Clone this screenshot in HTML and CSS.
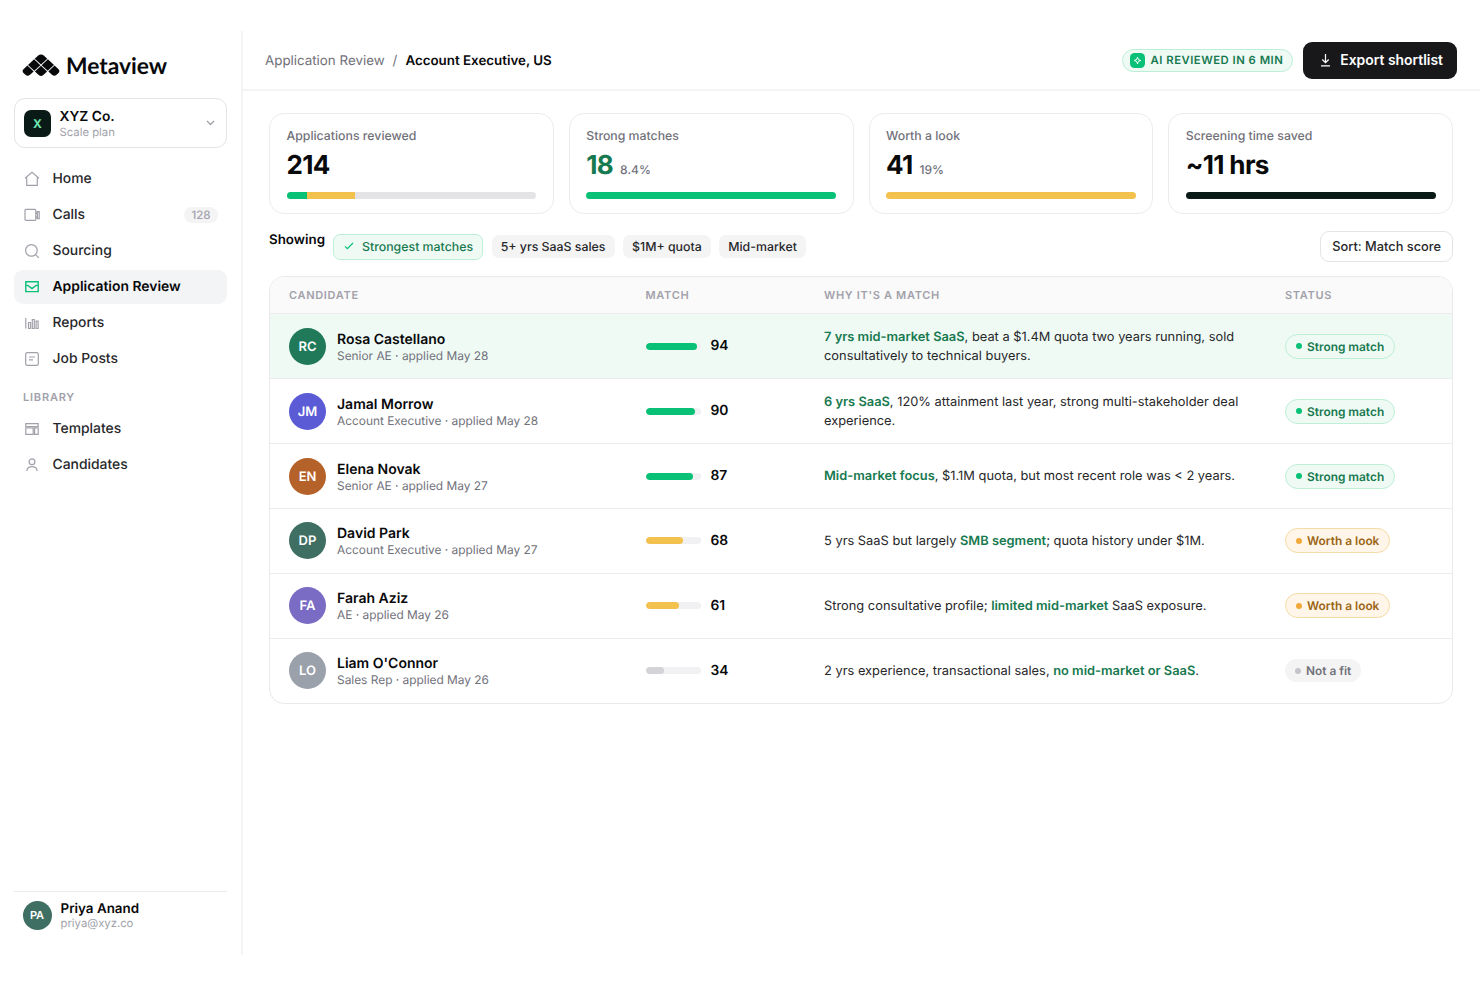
FILE: index.html
```html
<!DOCTYPE html>
<html lang="en">
<head>
    <meta charset="UTF-8">
    <meta name="viewport" content="width=device-width, initial-scale=1.0">
    <title>Metaview - Application Review</title>
    <link rel="stylesheet" href="styles.css">
</head>
<body>
    <div class="app">
        <aside class="sidebar">
            <div class="logo">
                <svg width="38" height="22" viewBox="0 0 38 22">
                    <g transform="translate(19 -1) scale(1.08 1) rotate(45)" fill="#08090a">
                        <path d="M0 4Q0 0 4 0H8.2V8.2H0Z"/>
                        <rect x="9" y="0" width="8" height="8.2"/>
                        <path d="M17.8 0H22.6Q25.6 0 25.6 3V5.2Q25.6 8.2 22.6 8.2H17.8Z"/>
                        <rect x="0" y="9" width="8.2" height="8"/>
                        <path d="M9 9H17V14Q17 17 14 17H9Z"/>
                        <path d="M0 17.8H8.2V22.6Q8.2 25.6 5.2 25.6H3Q0 25.6 0 22.6Z"/>
                    </g>
                </svg>
                <span>Metaview</span>
            </div>

            <div class="workspace">
                <div class="workspace-icon">X</div>
                <div class="workspace-info">
                    <strong>XYZ Co.</strong>
                    <span>Scale plan</span>
                </div>
                <svg class="chevron" width="9" height="6" viewBox="0 0 9 6"><path d="M1 1l3.5 3.5L8 1"/></svg>
            </div>

            <nav>
                <a class="nav-item">
                    <svg viewBox="0 0 16 16"><path d="M1 7.2L8 1.4l7 5.8M2.7 6v8.4h10.6V6"/></svg>
                    Home
                </a>
                <a class="nav-item">
                    <svg viewBox="0 0 16 16"><rect x="1" y="2.4" width="10.8" height="11" rx="1"/><path d="M11.8 6.6l1.6-2h1.8v7h-1.8l-1.6-2M13.4 4.6v7"/></svg>
                    Calls
                    <span class="count">128</span>
                </a>
                <a class="nav-item">
                    <svg viewBox="0 0 16 16"><circle cx="7.4" cy="7.4" r="5.8"/><path d="M11.6 11.6l3.2 3.2"/></svg>
                    Sourcing
                </a>
                <a class="nav-item active">
                    <svg viewBox="0 0 16 16"><path d="M1.8 2.8h12.4v9.8H1.8zM1.8 6.4h2L8 9.6l4.2-3.2h2"/></svg>
                    Application Review
                </a>
                <a class="nav-item">
                    <svg viewBox="0 0 16 16"><path d="M1.8 3v10.6M4.5 7.5h2v6h-2zM8.3 4.5h2v9h-2zM12.1 6.2h2v7.3h-2z"/></svg>
                    Reports
                </a>
                <a class="nav-item">
                    <svg viewBox="0 0 16 16"><rect x="1.7" y="1.7" width="12.6" height="12.6" rx="1.6"/><path d="M5 6h6M5 8.8h4"/></svg>
                    Job Posts
                </a>
                <div class="nav-title">LIBRARY</div>
                <a class="nav-item">
                    <svg viewBox="0 0 16 16"><path d="M1.8 2.6h12.4v3H1.8zM1.8 7h7.4v6.4H1.8zM10.6 7h3.6v6.4h-3.6z"/></svg>
                    Templates
                </a>
                <a class="nav-item">
                    <svg viewBox="0 0 16 16"><circle cx="8" cy="4.8" r="2.9"/><path d="M2.8 14c.3-2.8 2.4-4.4 5.2-4.4s4.900 1.600 5.200 4.400"/></svg>
                    Candidates
                </a>
            </nav>

            <div class="user">
                <div class="user-avatar">PA</div>
                <div class="user-info">
                    <strong>Priya Anand</strong>
                    <span>priya@xyz.co</span>
                </div>
            </div>
        </aside>

        <main>
            <header>
                <div class="breadcrumb">
                    <span>Application Review</span>
                    <span class="slash">/</span>
                    <strong>Account Executive, US</strong>
                </div>
                <div class="actions">
                    <div class="ai-badge">
                        <svg width="15" height="15" viewBox="0 0 15 15"><rect width="15" height="15" rx="4.5" fill="#08c177"/><path d="M7.5 4.2l.9 2.4 2.4.9-2.4.9-.9 2.4-.9-2.4-2.4-.9 2.4-.9z" fill="none" stroke="#fff" stroke-width="1"/></svg>
                        <span>AI REVIEWED IN 6 MIN</span>
                    </div>
                    <button class="export">
                        <svg width="11" height="14" viewBox="0 0 11 14"><path d="M5.5 1v8.5M2.3 6.5l3.2 3.2 3.2-3.2M1 12.8h9"/></svg>
                        <span>Export shortlist</span>
                    </button>
                </div>
            </header>

            <div class="content">
                <div class="stats">
                    <div class="stat">
                        <div class="stat-label">Applications reviewed</div>
                        <div class="stat-value">214</div>
                        <div class="bar"><i class="green" style="width: 8.4%"></i><i class="yellow" style="width: 19.1%"></i></div>
                    </div>
                    <div class="stat">
                        <div class="stat-label">Strong matches</div>
                        <div class="stat-value good">18 <small>8.4%</small></div>
                        <div class="bar"><i class="green" style="width: 100%"></i></div>
                    </div>
                    <div class="stat">
                        <div class="stat-label">Worth a look</div>
                        <div class="stat-value">41 <small>19%</small></div>
                        <div class="bar"><i class="yellow" style="width: 100%"></i></div>
                    </div>
                    <div class="stat">
                        <div class="stat-label">Screening time saved</div>
                        <div class="stat-value">~11 hrs</div>
                        <div class="bar"><i class="dark" style="width: 100%"></i></div>
                    </div>
                </div>

                <div class="filters">
                    <strong>Showing</strong>
                    <span class="chip selected"><svg width="10" height="8" viewBox="0 0 10 8"><path d="M1 4.4l2.4 2.3L9 1"/></svg>Strongest matches</span>
                    <span class="chip">5+ yrs SaaS sales</span>
                    <span class="chip">$1M+ quota</span>
                    <span class="chip">Mid-market</span>
                    <button class="sort">Sort: Match score</button>
                </div>

                <div class="table">
                    <div class="row head">
                        <div>CANDIDATE</div>
                        <div>MATCH</div>
                        <div>WHY IT'S A MATCH</div>
                        <div>STATUS</div>
                    </div>
                    <div class="row highlight">
                        <div class="candidate">
                            <div class="avatar rc">RC</div>
                            <div><strong>Rosa Castellano</strong><span>Senior AE · applied May 28</span></div>
                        </div>
                        <div class="match"><div class="meter"><i class="green" style="width: 94%"></i></div>94</div>
                        <div class="why"><b>7 yrs mid-market SaaS</b>, beat a $1.4M quota two years running, sold consultatively to technical buyers.</div>
                        <div><span class="status strong">Strong match</span></div>
                    </div>
                    <div class="row">
                        <div class="candidate">
                            <div class="avatar jm">JM</div>
                            <div><strong>Jamal Morrow</strong><span>Account Executive · applied May 28</span></div>
                        </div>
                        <div class="match"><div class="meter"><i class="green" style="width: 90%"></i></div>90</div>
                        <div class="why"><b>6 yrs SaaS</b>, 120% attainment last year, strong multi-stakeholder deal experience.</div>
                        <div><span class="status strong">Strong match</span></div>
                    </div>
                    <div class="row">
                        <div class="candidate">
                            <div class="avatar en">EN</div>
                            <div><strong>Elena Novak</strong><span>Senior AE · applied May 27</span></div>
                        </div>
                        <div class="match"><div class="meter"><i class="green" style="width: 87%"></i></div>87</div>
                        <div class="why"><b>Mid-market focus</b>, $1.1M quota, but most recent role was &lt; 2 years.</div>
                        <div><span class="status strong">Strong match</span></div>
                    </div>
                    <div class="row">
                        <div class="candidate">
                            <div class="avatar dp">DP</div>
                            <div><strong>David Park</strong><span>Account Executive · applied May 27</span></div>
                        </div>
                        <div class="match"><div class="meter"><i class="yellow" style="width: 68%"></i></div>68</div>
                        <div class="why">5 yrs SaaS but largely <b>SMB segment</b>; quota history under $1M.</div>
                        <div><span class="status maybe">Worth a look</span></div>
                    </div>
                    <div class="row">
                        <div class="candidate">
                            <div class="avatar fa">FA</div>
                            <div><strong>Farah Aziz</strong><span>AE · applied May 26</span></div>
                        </div>
                        <div class="match"><div class="meter"><i class="yellow" style="width: 61%"></i></div>61</div>
                        <div class="why">Strong consultative profile; <b>limited mid-market</b> SaaS exposure.</div>
                        <div><span class="status maybe">Worth a look</span></div>
                    </div>
                    <div class="row">
                        <div class="candidate">
                            <div class="avatar lo">LO</div>
                            <div><strong>Liam O'Connor</strong><span>Sales Rep · applied May 26</span></div>
                        </div>
                        <div class="match"><div class="meter"><i class="gray" style="width: 34%"></i></div>34</div>
                        <div class="why">2 yrs experience, transactional sales, <b>no mid-market or SaaS</b>.</div>
                        <div><span class="status no">Not a fit</span></div>
                    </div>
                </div>
            </div>
        </main>
    </div>
</body>
</html>
```
FILE: styles.css
```css
* {
    box-sizing: border-box;
}

body {
    margin: 0;
    padding-top: 31px;
    background: #fff;
    color: #08090a;
    font-family: Inter, "Liberation Sans", sans-serif;
    font-size: 14px;
    text-rendering: geometricPrecision;
}

strong,
b {
    font-weight: 600;
}

button {
    font-family: inherit;
    background: #fff;
}

.app {
    display: flex;
    height: 924px;
}

/* Sidebar */
.sidebar {
    display: flex;
    flex-direction: column;
    width: 243px;
    padding: 0 14px 22px;
    border-right: 2px solid #f4f4f5;
}

.logo {
    display: flex;
    align-items: center;
    gap: 6px;
    height: 67px;
    padding-left: 8px;
    font-family: Lato, sans-serif;
    font-size: 22.8px;
    font-weight: 700;
}

.logo svg {
    overflow: visible;
}

.workspace {
    display: flex;
    align-items: center;
    width: 213px;
    height: 50px;
    padding: 0 11px 0 9px;
    border: 1px solid #e4e4e7;
    border-radius: 11px;
}

.workspace-icon {
    width: 27px;
    height: 27px;
    margin-right: 8.5px;
    border-radius: 7px;
    background: #0a1a16;
    color: #6ee7b0;
    font-size: 12px;
    font-weight: 700;
    line-height: 27px;
    text-align: center;
}

.workspace-info strong,
.workspace-info span,
.user-info strong,
.user-info span {
    display: block;
}

.workspace-info strong {
    font-size: 13.8px;
    line-height: 16px;
    padding-top: 1px;
}

.workspace-info span {
    color: #a1a1aa;
    font-size: 11.3px;
    line-height: 14px;
}

.chevron {
    margin: 0 0 1px auto;
    fill: none;
    stroke: #a1a1aa;
    stroke-width: 1.3;
}

nav {
    padding-top: 14px;
}

.nav-item {
    display: flex;
    align-items: center;
    width: 213px;
    height: 34px;
    margin-bottom: 2px;
    padding: 0 9.5px 0 10px;
    border-radius: 9px;
    color: #27272a;
    font-size: 13.9px;
    font-weight: 500;
}

.nav-item svg {
    width: 16px;
    height: 16px;
    margin-right: 12.5px;
    fill: none;
    stroke: #a1a1aa;
    stroke-width: 1.2;
}

.nav-item.active {
    background: #f3f4f6;
    color: #08090a;
    font-weight: 600;
}

.nav-item.active svg {
    stroke: #08c177;
    stroke-width: 1.4;
}

.count {
    margin-left: auto;
    padding: 0 7px;
    border-radius: 8px;
    background: #f4f4f5;
    color: #a1a1aa;
    font-size: 11.5px;
    line-height: 16px;
}

.nav-title {
    padding: 12px 0 0 9px;
    height: 34px;
    color: #a1a1aa;
    font-size: 11px;
    font-weight: 600;
    letter-spacing: 0.8px;
    line-height: 14px;
}

.user {
    display: flex;
    gap: 9px;
    width: 213px;
    margin-top: auto;
    padding: 9px 8.5px 0;
    height: 42px;
    border-top: 1px solid #ececee;
}

.user-avatar {
    width: 29px;
    height: 29px;
    border-radius: 50%;
    background: #3f6f62;
    color: #fff;
    font-size: 11px;
    font-weight: 600;
    line-height: 29px;
    text-align: center;
}

.user-info strong {
    font-size: 13.4px;
    line-height: 16px;
}

.user-info span {
    color: #a1a1aa;
    font-size: 11.3px;
    line-height: 13px;
}

/* Top bar */
main {
    flex: 1;
}

header {
    display: flex;
    align-items: center;
    justify-content: space-between;
    height: 60px;
    padding: 0 23px 0 22px;
    border-bottom: 2px solid #f4f4f5;
}

.breadcrumb {
    display: flex;
    gap: 8px;
    padding-top: 2px;
    color: #71717a;
    font-size: 13.35px;
}

.breadcrumb strong {
    color: #08090a;
}

.actions {
    display: flex;
    align-items: center;
    gap: 10px;
}

.ai-badge {
    display: flex;
    align-items: center;
    gap: 6px;
    height: 23px;
    padding: 0 9px 0 7px;
    border: 1px solid #bdefd6;
    border-radius: 12px;
    background: #effaf5;
    color: #17794f;
    font-size: 11.3px;
    font-weight: 600;
    letter-spacing: 0.5px;
}

.export {
    display: flex;
    align-items: center;
    gap: 9px;
    height: 37px;
    padding: 0 14px 0 17px;
    border: none;
    border-radius: 9px;
    background: #18181b;
    color: #fff;
    font-size: 13.9px;
    font-weight: 600;
}

.export svg,
.chip svg {
    fill: none;
    stroke: #fff;
    stroke-width: 1.2;
}

/* Stats */
.content {
    padding: 22px 27px 0 26px;
}

.stats {
    display: grid;
    grid-template-columns: repeat(4, 1fr);
    gap: 15px;
}

.stat {
    height: 101px;
    padding: 14px 16.5px;
    border: 1px solid #ececee;
    border-radius: 15px;
}

.stat-label {
    color: #71717a;
    font-size: 12.3px;
    line-height: 16px;
    font-weight: 500;
}

.stat-value {
    height: 32px;
    margin-top: 6px;
    font-size: 26px;
    font-weight: 700;
    letter-spacing: -0.65px;
    line-height: 32px;
}

.stat-value.good {
    color: #17794f;
}

.stat-value small {
    margin-left: 1.5px;
    color: #71717a;
    font-size: 12px;
    font-weight: 500;
    letter-spacing: 0;
}

.bar,
.meter {
    display: flex;
    height: 7px;
    border-radius: 4px;
    background: #e4e4e7;
    overflow: hidden;
}

.bar {
    margin-top: 10px;
}

.green {
    background: #08c177;
}

.yellow {
    background: #f2c14e;
}

.dark {
    background: #0a1a16;
}

.gray {
    background: #d4d4d8;
}

/* Filters */
.filters {
    display: flex;
    align-items: center;
    gap: 8.5px;
    height: 31px;
    margin: 17px 0 14px;
}

.filters strong {
    margin-bottom: 13px;
    font-size: 13.35px;
}

.chip {
    padding: 0 9px;
    border-radius: 7px;
    background: #f4f4f5;
    color: #27272a;
    font-size: 12.35px;
    font-weight: 500;
    line-height: 23px;
}

.chip.selected {
    border: 1px solid #bdefd6;
    background: #effaf5;
    color: #17794f;
    line-height: 24px;
}

.chip svg {
    margin: 0 7.5px 1px 1px;
    stroke: #08c177;
}

.sort {
    height: 31px;
    margin-left: auto;
    padding: 0 11px;
    border: 1px solid #e4e4e7;
    border-radius: 9px;
    color: #27272a;
    font-size: 12.8px;
    font-weight: 500;
}

/* Candidates table */
.table {
    border: 1px solid #e9e9ec;
    border-radius: 15px;
    overflow: hidden;
}

.row {
    display: grid;
    grid-template-columns: 356.5px 178.5px 461px 1fr;
    align-items: center;
    height: 64.9px;
    padding-left: 19px;
    border-top: 1px solid #ececee;
}

.row.head {
    height: 36.3px;
    border-top: none;
    background: #fafafa;
    color: #a1a1aa;
    font-size: 11px;
    font-weight: 600;
    letter-spacing: 0.68px;
}

.row.highlight {
    background: #effaf5;
}

.candidate {
    display: flex;
    align-items: center;
    gap: 11px;
}

.candidate strong,
.candidate span {
    display: block;
}

.candidate strong {
    padding-top: 1px;
    line-height: 17px;
}

.candidate span {
    color: #71717a;
    font-size: 11.9px;
    line-height: 15px;
}

.avatar {
    width: 37px;
    height: 37px;
    border-radius: 50%;
    color: #fff;
    font-size: 13px;
    font-weight: 600;
    line-height: 38px;
    text-align: center;
}

.rc { background: #207a5a; }
.jm { background: #5b5bd6; }
.en { background: #b5622a; }
.dp { background: #3f6f62; }
.fa { background: #7a6bc4; }
.lo { background: #9aa1aa; }

.match {
    display: flex;
    align-items: center;
    gap: 10px;
    font-size: 13.8px;
    font-weight: 600;
    line-height: 18px;
}

.meter {
    width: 55px;
    background: #f1f1f3;
}

.meter i {
    border-radius: 4px;
}

.why {
    width: 425px;
    padding-top: 3px;
    color: #27272a;
    font-size: 12.85px;
    line-height: 18.5px;
}

.why b {
    color: #17794f;
}

.status {
    display: inline-flex;
    align-items: center;
    gap: 5px;
    height: 25px;
    padding: 0 10px;
    border: 1px solid;
    border-radius: 13px;
    font-size: 11.9px;
    font-weight: 600;
}

.status::before {
    content: "";
    width: 6px;
    height: 6px;
    border-radius: 50%;
}

.status.strong {
    border-color: #bdefd6;
    background: #effaf5;
    color: #17794f;
}

.status.strong::before {
    background: #08c177;
}

.status.maybe {
    border-color: #f5dca6;
    background: #fff5e8;
    color: #9a6412;
}

.status.maybe::before {
    background: #f2a93b;
}

.status.no {
    height: 23px;
    border: none;
    background: #f4f4f5;
    color: #71717a;
}

.status.no::before {
    background: #c4c4ca;
}
```
